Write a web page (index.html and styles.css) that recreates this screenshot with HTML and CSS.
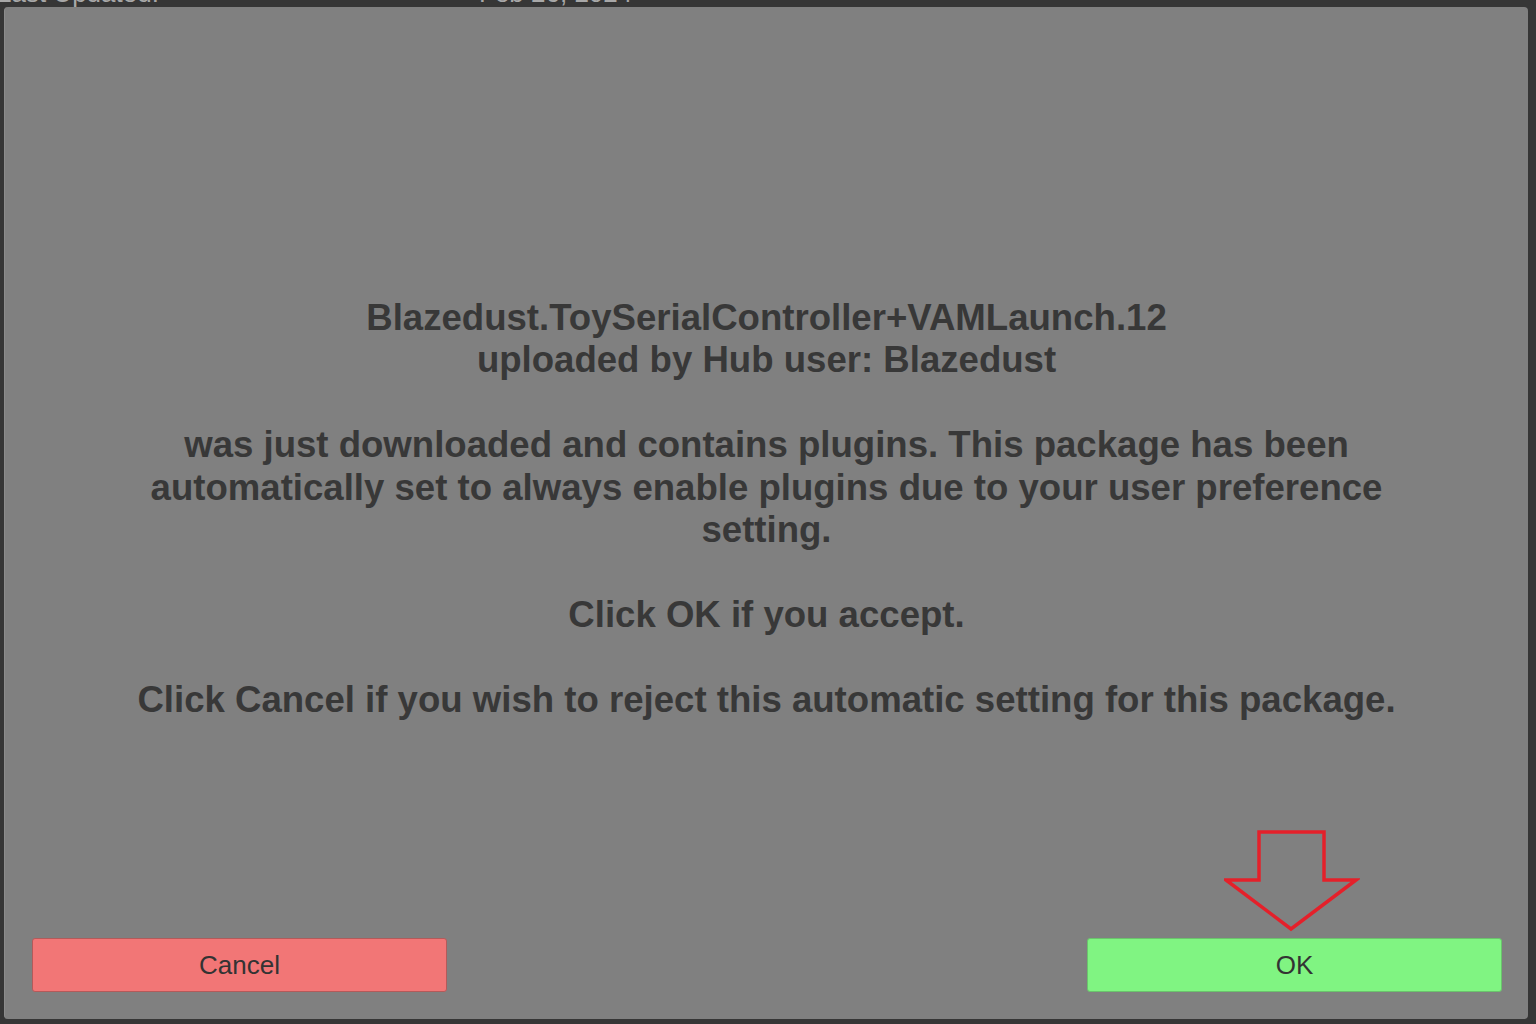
FILE: index.html
```html
<!DOCTYPE html>
<html>
<head>
<meta charset="utf-8">
<link rel="stylesheet" href="styles.css">
</head>
<body>
<div class="page">
  <div class="meta-row">
    <span class="meta-label">Last Updated:</span>
    <span class="meta-value">Feb 26, 2024</span>
  </div>
</div>
<div class="dialog">
  <div class="message">
    <p>Blazedust.ToySerialController+VAMLaunch.12<br>uploaded by Hub user: Blazedust</p>
    <p>was just downloaded and contains plugins. This package has been automatically set to always enable plugins due to your user preference setting.</p>
    <p>Click OK if you accept.</p>
    <p>Click Cancel if you wish to reject this automatic setting for this package.</p>
  </div>
  <div class="buttons">
    <button class="btn btn-cancel">Cancel</button>
    <div class="ok-wrap">
      <svg class="arrow" width="136" height="104" viewBox="0 0 136 104">
        <path d="M35 3 H100 V51 H132 L67 100 L2 51 H35 Z" fill="none" stroke="#e4202a" stroke-width="3.5" stroke-linejoin="miter"/>
      </svg>
      <button class="btn btn-ok">OK</button>
    </div>
  </div>
</div>
</body>
</html>
```
FILE: styles.css
```css
html, body {
  margin: 0;
  padding: 0;
  width: 1536px;
  height: 1024px;
  overflow: hidden;
  background: #363636;
}
.page {
  height: 1024px;
}
.meta-row {
  display: flex;
  margin-top: -22px;
  font-family: "Liberation Sans", Arial, sans-serif;
  font-size: 26px;
  color: #a8a8a8;
  line-height: 30px;
}
.meta-label {
  width: 482px;
  margin-left: -3px;
}
.dialog {
  position: absolute;
  left: 4px;
  top: 7px;
  width: 1524px;
  height: 1012px;
  background: #808080;
  border-left: 1px solid #8c8c8c;
  border-radius: 4px;
  display: flex;
  flex-direction: column;
  box-sizing: border-box;
}
.message {
  flex: 1;
  display: flex;
  flex-direction: column;
  justify-content: flex-start;
  align-items: center;
  text-align: center;
  font-family: "Liberation Sans", Arial, sans-serif;
  font-weight: bold;
  font-size: 36.6px;
  line-height: 42.45px;
  color: #383838;
  padding: 290px 120px 0 120px;
}
.message p {
  margin: 0 0 42.45px 0;
}
.message p:last-child {
  margin-bottom: 0;
}
.buttons {
  display: flex;
  justify-content: space-between;
  align-items: flex-end;
  padding: 0 26px 27px 27px;
}
.ok-wrap {
  display: flex;
  flex-direction: column;
  align-items: center;
}
.arrow {
  display: block;
  margin-left: -5px;
  margin-bottom: 5px;
}
.btn {
  width: 415px;
  height: 54px;
  border-radius: 3px;
  font-family: "Liberation Sans", Arial, sans-serif;
  font-size: 26px;
  color: #333333;
  padding: 0;
  display: flex;
  align-items: center;
  justify-content: center;
  box-sizing: border-box;
}
.btn-cancel {
  background: #f27676;
  border: 1px solid #b45a5a;
}
.btn-ok {
  background: #80f482;
  border: 1px solid #6ac46c;
}
```
